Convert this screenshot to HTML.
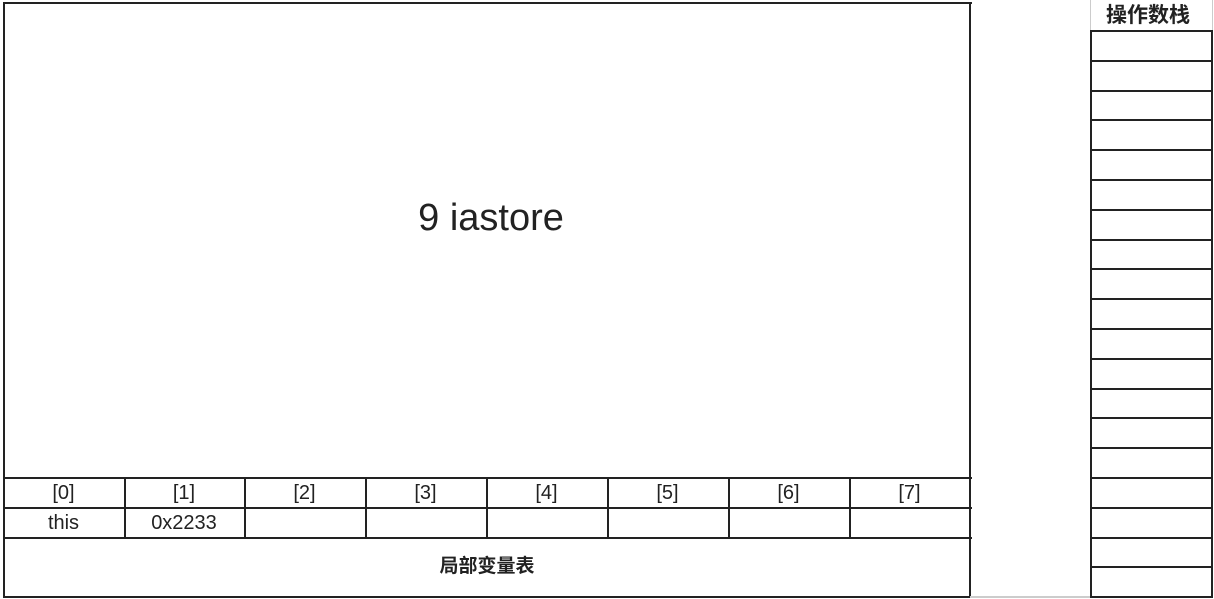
<!DOCTYPE html>
<html><head><meta charset="utf-8"><style>
body{margin:0;width:1214px;height:599px;background:#fff;position:relative;overflow:hidden;font-family:"Liberation Sans","Noto Sans CJK SC",sans-serif;color:#222}
.a{position:absolute}
.h{position:absolute;height:2px;background:#222}
.v{position:absolute;width:2px;background:#222}
.c{position:absolute;text-align:center;font-size:20px;line-height:30px;width:121px}
</style></head><body>
<div class="h" style="left:3px;top:2px;width:969px"></div>
<div class="h" style="left:3px;top:477px;width:969px"></div>
<div class="h" style="left:3px;top:507px;width:969px;height:1.5px"></div>
<div class="h" style="left:3px;top:537px;width:969px;height:1.5px"></div>
<div class="h" style="left:3px;top:596px;width:969px"></div>
<div class="v" style="left:3px;top:2px;height:596px"></div>
<div class="v" style="left:969px;top:2px;height:596px"></div>
<div class="a" style="left:970px;top:596px;width:121px;height:2px;background:#ccc"></div>
<div class="a" style="left:0;top:188px;width:982px;text-align:center;font-size:38px;line-height:60px">9 iastore</div>
<div class="a" style="left:3px;top:538px;width:968px;text-align:center;font-size:19px;font-weight:bold;line-height:58px">局部变量表</div>
<div id="cols"></div>
<div class="a" style="left:1090px;top:0;width:1px;height:31px;background:#ccc"></div>
<div class="a" style="left:1212px;top:0;width:1px;height:31px;background:#ccc"></div>
<div class="a" style="left:1091px;top:0;width:99px;text-align:right;font-size:21px;font-weight:bold;line-height:32px">操作数栈</div>
<div class="v" style="left:1090px;top:30px;height:568px"></div>
<div class="v" style="left:1211px;top:30px;height:568px"></div>
<div id="st"></div>
<script>
var s='',xs=[3,124,244,365,486,607,728,849,970],vals=['this','0x2233'];
for(var i=0;i<8;i++){
 if(i>0)s+='<div class="v" style="left:'+xs[i]+'px;top:478px;height:60px;width:1.5px"></div>';
 s+='<div class="c" style="left:'+xs[i]+'px;top:478px;width:'+(xs[i+1]-xs[i])+'px">['+i+']</div>';
 if(vals[i])s+='<div class="c" style="left:'+xs[i]+'px;top:508px;width:'+(xs[i+1]-xs[i])+'px">'+vals[i]+'</div>';
}
document.getElementById('cols').innerHTML=s;
var t='';
for(var k=0;k<20;k++){var y=Math.round(30+k*29.8);t+='<div class="h" style="left:1090px;top:'+y+'px;width:123px"></div>';}
document.getElementById('st').innerHTML=t;
</script>
</body></html>
